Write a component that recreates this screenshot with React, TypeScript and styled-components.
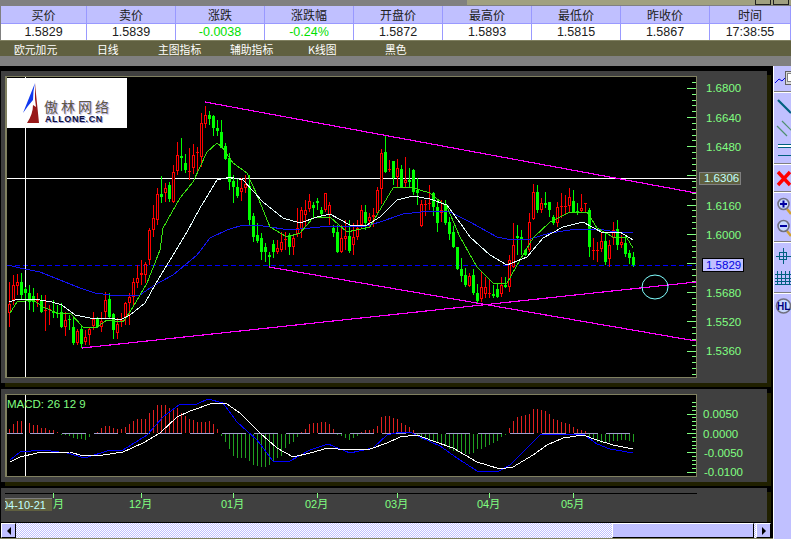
import styled, { createGlobalStyle } from "styled-components";

const GlobalStyle = createGlobalStyle`
  html, body {
    margin: 0;
    background: #000;
    overflow: hidden;
  }
`;

const Page = styled.div`
  width: 791px;
  height: 539px;
  background: #000;
  display: flex;
  flex-direction: column;
  overflow: hidden;
`;

const TitleStrip = styled.div`
  height: 5px;
  display: flex;
  justify-content: flex-end;
  background: linear-gradient(to right, #808080 0 467px, #a0a080 467px);
`;

const StripButton = styled.div`
  width: 14px;
  height: 4px;
  margin-right: 2px;
  border: 1px solid #202020;
  border-top: none;
`;

const QuoteTable = styled.div`
  display: grid;
  grid-template-columns: 86px repeat(7, 89px) 1fr;
  grid-template-rows: 18px 16px;
  padding-left: 1px;
  background: #808080;
  border-top: 1px solid #808080;
  border-bottom: 1px solid #808060;
  font-family: "Liberation Sans", "Noto Sans CJK SC", sans-serif;
`;

const HeadCell = styled.div`
  display: flex;
  align-items: center;
  justify-content: center;
  background: #c0c0ff;
  color: #202020;
  font-size: 12px;
  border-right: 1px solid #9999ff;
  border-bottom: 1px solid #9999ff;
`;

const ValueCell = styled.div<{ $down?: boolean }>`
  display: flex;
  align-items: center;
  justify-content: center;
  background: #fff;
  color: ${(p) => (p.$down ? "#00e000" : "#202020")};
  font-size: 12.5px;
  border-right: 1px solid #9999ff;
`;

const Toolbar = styled.div`
  height: 15px;
  display: grid;
  grid-template-columns: 83px 61px 72px 78px 77px auto;
  align-items: center;
  padding-left: 14px;
  background: #606040;
  color: #fff;
  font-family: "Noto Sans CJK SC", "Liberation Sans", sans-serif;
  font-size: 10.8px;
`;

const GreyBar = styled.div`
  height: 10px;
  background: #808080;
`;

const Main = styled.div`
  flex: 1;
  display: flex;
  min-height: 0;
`;

const ChartColumn = styled.div`
  width: 773px;
  padding-top: 5px;
  display: flex;
  flex-direction: column;
`;

const Panel = styled.div<{ $height: number; $gap: number }>`
  position: relative;
  width: 766px;
  height: ${(p) => p.$height}px;
  margin: 0 0 ${(p) => p.$gap}px 1px;
  background: #404040;
  box-shadow: 4px 4px 0 #202000;

  & > svg {
    display: block;
  }
`;

const Logo = styled.div`
  position: absolute;
  left: 6px;
  top: 7px;
  width: 120px;
  height: 50px;
  background: #fff;
`;

const LogoMark = styled.svg`
  position: absolute;
  left: 16px;
  top: 3px;
`;

const LogoName = styled.div`
  position: absolute;
  left: 37px;
  top: 21px;
  color: #605848;
  font-family: "Noto Sans CJK SC", sans-serif;
  font-size: 14px;
  letter-spacing: 3px;
  line-height: 15px;
  white-space: nowrap;
  text-shadow: 1px 1px 1px #b0a8e0;
`;

const LogoSite = styled.div`
  position: absolute;
  left: 38px;
  top: 36px;
  color: #101040;
  font-family: "Liberation Sans", sans-serif;
  font-size: 9px;
  font-weight: 700;
  letter-spacing: 0.6px;
  line-height: 11px;
  text-shadow: 1px 1px 0 #a0a0d0;
`;

const ScrollBar = styled.div`
  position: relative;
  height: 16px;
  display: flex;
  margin-left: 1px;
  border-top: 1px solid #000;
  box-sizing: border-box;
  background: repeating-conic-gradient(#c0c0ff 0 25%, #fff 0 50%) 0 0 / 2px 2px;
`;

const ScrollButton = styled.div`
  width: 15px;
  display: flex;
  align-items: center;
  justify-content: center;
  background: #c0c0ff;
  border: 1px solid;
  border-color: #fff #000 #000 #fff;
  box-sizing: border-box;
`;

const ScrollThumb = styled.div`
  width: 142px;
  margin: 0 2px 0 auto;
  background: #c0c0ff;
  border: 1px solid;
  border-color: #fff #000 #000 #fff;
  box-sizing: border-box;
`;

const ScrollSpacer = styled.div`
  width: 2px;
  background: #000;
`;

const BottomEdge = styled.div`
  height: 1px;
  background: #808060;
`;

const SideBar = styled.div`
  width: 18px;
  padding-top: 4px;
  box-sizing: border-box;
  background: #c0c0ff;
  border-left: 1px solid #fff;
  display: flex;
  flex-direction: column;
  overflow: hidden;
`;

const Tool = styled.svg<{ $height: number }>`
  display: block;
  flex: none;
  width: 22px;
  height: ${(p) => p.$height}px;
`;

const ToolRule = styled.div`
  flex: none;
  height: 2px;
  background: linear-gradient(#808080 50%, #fff 50%);
`;

const heads = ["买价", "卖价", "涨跌", "涨跌幅", "开盘价", "最高价", "最低价", "昨收价", "时间"];
const values = ["1.5829", "1.5839", "-0.0038", "-0.24%", "1.5872", "1.5893", "1.5815", "1.5867", "17:38:55"];
const menu = ["欧元加元", "日线", "主图指标", "辅助指标", "K线图", "黑色"];

// x = 9 + 4i; colour, body top, body bottom, wick top, wick bottom
const candleData = `
r304,313,282,327 r285,300,275,305 r282,286,274,295 g282,295,273,300 g289,293,287,300 g293,302,285,310
g296,302,288,312 r300,301,293,307 g301,312,295,313 r310,311,295,331 r309,310,305,325 g311,313,300,318
g313,314,305,318 g312,327,303,328 r320,327,312,336 g319,320,315,330 g327,343,318,345 r331,343,329,345
g329,344,325,348 r337,342,330,345 r329,335,327,345 r319,326,312,330 g318,327,317,328 r321,327,312,332
r300,312,292,318 g299,317,293,318 g314,330,313,339 r324,333,318,339 r320,321,313,327 r303,317,302,325
r297,303,293,325 r282,297,278,307 r278,283,265,288 r273,275,260,285 r264,275,262,283 r230,260,228,265
r218,230,205,237 r194,220,188,225 g194,197,176,203 r188,193,183,202 g185,199,182,202 r172,202,165,203
r155,171,142,175 g156,158,138,171 g163,170,154,173 r171,172,148,180 r155,168,144,174 r152,153,147,171
r123,157,113,167 r115,124,106,128 g115,119,111,125 g116,128,115,136 g128,131,120,136 g132,148,120,148
g146,159,143,160 g158,182,153,190 g181,187,175,203 g187,196,178,198 r188,192,178,201 r184,188,175,193
g186,220,175,225 g216,237,213,242 g235,241,223,243 g238,252,233,260 g247,252,243,262 g255,257,252,268
g244,252,240,258 r248,252,240,254 r242,250,232,252 r239,240,232,250 g235,247,233,255 r238,247,235,255
r228,234,208,237 r210,229,207,238 r210,215,200,227 r201,209,194,212 g205,208,202,217 g201,203,198,210
g210,214,207,217 r193,210,193,212 r205,215,202,225 g228,233,225,237 g232,252,225,253 r238,252,225,253
r236,239,220,250 g236,251,220,253 r237,245,223,255 r228,237,220,240 r210,225,205,228 g212,223,205,230
r217,221,213,228 r215,217,208,227 r190,213,187,213 r153,189,149,204 g152,172,135,173 r169,170,160,172
g161,178,161,185 r168,177,159,187 g169,187,165,187 r180,183,157,188 g180,182,168,187 g170,192,169,195
g190,193,178,205 r204,226,200,227 r204,205,200,216 r203,204,185,210 g193,207,192,216 g207,223,200,232
r210,213,200,222 g204,223,200,225 g222,234,217,240 g232,247,226,248 g247,269,247,270 g269,276,258,282
g275,285,268,287 r276,286,273,287 g275,293,269,295 g293,301,284,303 r287,299,272,302 r287,294,277,298
r293,294,279,298 g294,296,285,298 g289,297,283,298 r285,294,277,297 g285,287,277,288 r260,287,255,292
r245,267,223,268 g236,238,225,255 g237,239,230,255 g250,255,249,256 r222,250,213,252 r192,219,184,220
g192,210,185,213 r203,210,198,213 g203,205,192,208 g202,210,202,217 g217,223,215,225 r207,223,202,227
r206,207,193,218 r206,207,195,215 r197,206,188,212 g201,213,190,213 g211,213,203,215 r208,211,194,212
r203,204,203,213 g210,247,208,257 r250,251,238,260 r250,251,242,262 r241,249,232,252 g241,262,232,265
r245,259,240,267 r230,238,222,245 g229,245,220,250 r242,245,235,248 g243,254,235,257 g253,258,250,264
g257,265,252,267
`
  .trim()
  .split(/\s+/)
  .map((s, i) => {
    const [top, bot, hi, lo] = s.slice(1).split(",").map(Number);
    return { x: 9 + 4 * i, up: s[0] === "r", top, bot, hi, lo };
  });

const maBlue =
  "8,265 20,268 40,272 60,280 80,288 95,293 110,295 130,296 140,295 150,288 160,282 173,275 197,255 210,238 227,230 243,225 263,226 290,230 310,228 330,226 363,227 380,222 403,214 430,211 450,212 470,222 497,237 507,239 530,239 550,233 577,229 597,229 617,232 633,233";
const maWhite =
  "9,302 15,300 25,299 40,300 52,302 62,305 75,315 90,318 110,318 120,320 130,315 145,303 155,285 167,265 187,232 200,208 217,180 230,177 243,180 263,202 283,218 300,223 317,217 330,214 350,225 367,225 380,217 397,200 413,196 430,199 447,205 463,227 470,237 490,255 507,265 527,257 543,238 563,227 583,222 603,233 620,232 633,240";
const maGreen =
  "10,313 17,302 33,300 43,307 57,313 70,313 83,327 97,327 107,320 123,322 133,307 147,283 160,250 163,228 180,198 193,182 207,152 217,143 222,147 233,163 247,173 257,195 270,227 287,237 300,233 313,218 330,217 347,232 370,227 378,213 393,188 410,187 430,193 447,207 460,237 473,260 477,267 493,283 507,283 520,260 533,238 550,222 570,212 587,212 597,228 613,237 627,238 633,248";

const macdWhite =
  "10,462 20,457 37,453 70,452 83,456 103,455 123,452 143,443 160,433 177,417 190,411 213,403 227,404 240,413 260,433 277,448 293,457 310,453 328,448 347,450 370,449 387,443 400,437 417,435 433,441 453,448 477,462 500,469 513,467 533,455 547,445 563,438 583,435 597,440 613,445 633,449";
const macdBlue =
  "10,460 20,452 43,450 67,453 85,458 107,451 123,450 147,435 163,417 180,404 197,404 208,399 223,403 237,422 257,440 273,461 290,461 310,450 328,444 350,453 373,448 387,435 400,432 410,432 420,437 440,446 457,458 477,471 497,472 510,465 523,452 540,435 560,434 583,434 597,444 610,449 633,453";

const histogram = [
  4, 9, 12, 12, 0, 10, 8, 8, 5, 5, 3, 3, 1, -1, -1, -2, -4, -5, -5, -6, -3, 0, 1, 5, 7, 7, 5, 4, 4, 6, 9, 12, 14, 14, 14, 20,
  23, 28, 28, 28, 25, 25, 25, 20, 17, 14, 13, 11, 11, 11, 12, 9, 4, -2, -8, -15, -22, -24, -24, -24, -27, -31, -32, -33, -33,
  -31, -28, -24, -22, -14, -10, -8, -3, 1, 4, 9, 10, 10, 11, 11, 9, 4, -1, -2, -4, -6, -4, -2, 1, 3, 3, 4, 7, 16, 17, 17, 15, 14,
  10, 8, 6, 3, -1, -5, -6, -7, -8, -9, -10, -12, -15, -17, -18, -18, -20, -20, -19, -15, -15, -13, -11, -9, -7, -3, -1, 5, 12,
  16, 17, 18, 19, 24, 24, 23, 22, 19, 14, 13, 11, 10, 9, 6, 4, 3, 2, -3, -4, -8, -9, -9, -8, -7, -7, -6, -6, -7, -8,
];

const priceLabels = [
  ["1.6800", 88],
  ["1.6640", 118],
  ["1.6480", 147],
  ["1.6160", 206],
  ["1.6000", 235],
  ["1.5680", 293],
  ["1.5520", 322],
  ["1.5360", 351],
] as const;

const macdLabels = [
  ["0.0050", 414],
  ["0.0000", 434],
  ["-0.0050", 453],
  ["-0.0100", 472],
] as const;

const months = [
  ["12月", 141],
  ["01月", 233],
  ["02月", 317],
  ["03月", 397],
  ["04月", 489],
  ["05月", 573],
] as const;

const axisFont = { fontFamily: '"Liberation Sans", "Noto Sans CJK SC", sans-serif', fill: "#80ff80" };

function Frame({ top, bottom }: { top: number; bottom: number }) {
  return (
    <>
      <rect x={5} y={top} width={692} height={bottom - top} fill="#808060" />
      <rect x={7} y={top + 1} width={689} height={bottom - top - 2} fill="#000" />
    </>
  );
}

function Ticks({ from, to, step, every, first }: { from: number; to: number; step: number; every: number; first: number }) {
  const out = [];
  for (let i = 0; from + i * step <= to; i++) {
    const y = Math.round(from + i * step);
    const long = (i - first) % every === 0;
    out.push(<rect key={i} x={long ? 687 : 692} y={y} width={long ? 9 : 4} height={1} fill="#80ff80" />);
  }
  return <>{out}</>;
}

function Candles() {
  return (
    <g>
      {candleData.map((c) => {
        const color = c.up ? "#ff0000" : "#00ff00";
        const h = c.bot - c.top;
        return (
          <g key={c.x}>
            <rect x={c.x} y={c.hi} width={1} height={c.lo - c.hi} fill={color} />
            <rect x={c.x - 1} y={c.top} width={3} height={Math.max(h, 1)} fill={color} />
            {c.up && h > 2 && <rect x={c.x} y={c.top + 1} width={1} height={h - 2} fill="#000" />}
          </g>
        );
      })}
    </g>
  );
}

function PriceChart() {
  return (
    <svg width={766} height={312} viewBox="1 71 766 312" shapeRendering="crispEdges">
      <Frame top={76} bottom={378} />
      <Ticks from={82} to={377} step={5.84} every={5} first={1} />
      <line x1={7} y1={265.5} x2={696} y2={265.5} stroke="#0000ff" strokeDasharray="5 3" />
      <rect x={25} y={77} width={1} height={300} fill="#fff" />
      <rect x={7} y={178} width={689} height={1} fill="#fff" />
      <Candles />
      <polyline points={maBlue} fill="none" stroke="#1414f0" />
      <polyline points={maGreen} fill="none" stroke="#38e010" />
      <polyline points={maWhite} fill="none" stroke="#eaffff" />
      <line x1={205} y1={102} x2={696} y2={193} stroke="#ff00ff" strokeWidth={1.15} />
      <line x1={269} y1={267} x2={696} y2={341} stroke="#ff00ff" strokeWidth={1.15} />
      <line x1={82} y1={348} x2={696} y2={282} stroke="#ff00ff" strokeWidth={1.15} />
      <ellipse cx={655} cy={287} rx={13} ry={12} fill="none" stroke="#80ffff" shapeRendering="auto" />
      <g shapeRendering="auto">
        {priceLabels.map(([t, y]) => (
          <text key={t} x={706} y={y + 4} fontSize={11.5} {...axisFont}>
            {t}
          </text>
        ))}
        <rect x={699.5} y={172.5} width={41} height={12} fill="#606040" stroke="#808080" />
        <text x={704} y={182} fontSize={11.5} fontFamily={axisFont.fontFamily} fill="#c0ffff">
          1.6306
        </text>
        <rect x={702.5} y={258.5} width={41} height={13} fill="#c0c0ff" stroke="#000" />
        <text x={706} y={269} fontSize={11.5} fontFamily={axisFont.fontFamily} fill="#0000e0">
          1.5829
        </text>
      </g>
    </svg>
  );
}

function MacdChart() {
  return (
    <svg width={766} height={93} viewBox="1 389 766 93" shapeRendering="crispEdges">
      <Frame top={394} bottom={477} />
      <Ticks from={402} to={472} step={3.87} every={5} first={3} />
      <rect x={7} y={433} width={16} height={1} fill="#a0a0d0" />
      <line x1={30} y1={433.5} x2={632} y2={433.5} stroke="#a0a0d0" strokeDasharray="24 8" />
      {histogram.map((v, i) => {
        const x = i < 98 ? 9 + 4 * i : 401 + 4 * (i - 98);
        return v >= 0 ? (
          <rect key={i} x={x} y={433 - v} width={1} height={v} fill="#e02020" />
        ) : (
          <rect key={i} x={x} y={434} width={1} height={-v} fill="#20a020" />
        );
      })}
      <rect x={25} y={395} width={1} height={81} fill="#fff" />
      <polyline points={macdBlue} fill="none" stroke="#0000ff" />
      <polyline points={macdWhite} fill="none" stroke="#fff" />
      <g shapeRendering="auto">
        <text x={7} y={408} fontSize={11.5} {...axisFont}>
          MACD: 26 12 9
        </text>
        {macdLabels.map(([t, y]) => (
          <text key={t} x={t.startsWith("-") ? 704 : 703} y={y + 4} fontSize={11.5} {...axisFont}>
            {t}
          </text>
        ))}
      </g>
      <rect x={697} y={476} width={60} height={6} fill="#404040" />
    </svg>
  );
}

function TimeAxis() {
  return (
    <svg width={766} height={34} viewBox="1 488 766 34" shapeRendering="crispEdges">
      <rect x={5} y={493} width={692} height={1} fill="#000" />
      <rect x={53} y={493} width={1} height={5} fill="#80ff80" />
      {months.map(([t, x]) => (
        <g key={t}>
          <rect x={x} y={493} width={1} height={5} fill="#80ff80" />
          <text x={x - 12} y={508} fontSize={11} {...axisFont} shapeRendering="auto">
            {t}
          </text>
        </g>
      ))}
      <text x={53} y={508} fontSize={11} {...axisFont} shapeRendering="auto">
        月
      </text>
      <rect x={5} y={498} width={47} height={13} fill="#606040" />
      <rect x={5} y={498} width={47} height={1} fill="#808080" />
      <svg x={5} y={498} width={47} height={13}>
        <text x={41} y={11} textAnchor="end" fontSize={11} fontFamily={axisFont.fontFamily} fill="#c0ffff">
          04-10-21
        </text>
      </svg>
    </svg>
  );
}

function LineChartTool() {
  return (
    <Tool $height={21} viewBox="0 0 22 21">
      <polyline points="1,13 5,9 8,11 12,7 15,10 17,7" fill="none" stroke="#0000e0" />
      <rect x={11.5} y={1.5} width={8} height={13} fill="#d8d8d8" stroke="#606060" />
      <rect x={13.5} y={3.5} width={5} height={8} fill="#fff" stroke="#808080" />
    </Tool>
  );
}

function TrendTool() {
  return (
    <Tool $height={26} viewBox="0 0 22 26">
      <line x1={4} y1={7} x2={17} y2={20} stroke="#006080" strokeWidth={2.2} />
    </Tool>
  );
}

function ChannelTool() {
  return (
    <Tool $height={22} viewBox="0 0 22 22">
      <line x1={3} y1={7} x2={13} y2={17} stroke="#509070" strokeWidth={1.2} />
      <line x1={8} y1={2} x2={18} y2={12} stroke="#509070" strokeWidth={1.2} />
    </Tool>
  );
}

function LevelsTool() {
  return (
    <Tool $height={22} viewBox="0 0 22 22">
      <rect x={4} y={3} width={16} height={1} fill="#006080" />
      <rect x={4} y={6} width={16} height={1} fill="#006080" />
      <rect x={4} y={4} width={16} height={2} fill="#fff" />
      <rect x={4} y={14} width={16} height={1} fill="#006080" />
    </Tool>
  );
}

function DeleteTool() {
  return (
    <Tool $height={26} viewBox="0 0 22 26">
      <path d="M4 7 L16 20 M16 7 L4 20" stroke="#ff0000" strokeWidth={3.4} />
    </Tool>
  );
}

function ZoomTool({ plus, cy }: { plus?: boolean; cy: number }) {
  return (
    <Tool $height={24} viewBox="0 0 22 24">
      <line x1={13} y1={cy + 5} x2={17} y2={cy + 10} stroke="#d0a030" strokeWidth={2.4} />
      <circle cx={9.5} cy={cy} r={5.5} fill="#c8d8ff" stroke="#707080" strokeWidth={1.6} />
      <rect x={6} y={cy - 1} width={7} height={2} fill="#0000a0" />
      {plus && <rect x={8.5} y={cy - 3.5} width={2} height={7} fill="#0000a0" />}
    </Tool>
  );
}

function CrossTool() {
  return (
    <Tool $height={25} viewBox="0 0 22 25">
      <rect x={5.5} y={9.5} width={7} height={7} fill="none" stroke="#006080" />
      <rect x={9} y={5} width={1} height={16} fill="#006080" />
      <rect x={2} y={13} width={15} height={1} fill="#006080" />
    </Tool>
  );
}

function GridTool() {
  return (
    <Tool $height={24} viewBox="0 0 22 24">
      {[3, 7, 11, 15].map((x) => (
        <rect key={x} x={x} y={3} width={1} height={14} fill="#006080" />
      ))}
      {[6, 10, 13, 16].map((y) => (
        <rect key={y} x={1} y={y} width={17} height={1} fill="#006080" />
      ))}
    </Tool>
  );
}

function HighLowTool() {
  return (
    <Tool $height={24} viewBox="0 0 22 24">
      <circle cx={9.5} cy={12} r={7} fill="#c8d8ff" stroke="#707080" strokeWidth={1.6} />
      <text x={3} y={16} fontSize={10} fontWeight={700} fontFamily="Liberation Sans, sans-serif" fill="#000080">
        HL
      </text>
    </Tool>
  );
}

export default function App() {
  return (
    <Page>
      <GlobalStyle />
      <TitleStrip>
        <StripButton />
        <StripButton />
      </TitleStrip>
      <QuoteTable>
        {heads.map((h) => (
          <HeadCell key={h}>{h}</HeadCell>
        ))}
        {values.map((v, i) => (
          <ValueCell key={v} $down={i === 2 || i === 3}>
            {v}
          </ValueCell>
        ))}
      </QuoteTable>
      <Toolbar>
        {menu.map((m) => (
          <span key={m}>{m}</span>
        ))}
      </Toolbar>
      <GreyBar />
      <Main>
        <ChartColumn>
          <Panel $height={312} $gap={6}>
            <PriceChart />
            <Logo>
              <LogoMark width={20} height={44} viewBox="0 0 20 44">
                <path d="M12 2 L0 32 L5 25 L10 19 L10.5 10 Z" fill="#1038f0" />
                <path d="M12 2 C13 14 15 30 16 42 L4 42 C8 36 10 30 10 24 L13 26 L12 18 Z" fill="#981818" />
              </LogoMark>
              <LogoName>傲林网络</LogoName>
              <LogoSite>ALLONE.CN</LogoSite>
            </Logo>
          </Panel>
          <Panel $height={93} $gap={6}>
            <MacdChart />
          </Panel>
          <Panel $height={34} $gap={0}>
            <TimeAxis />
          </Panel>
          <ScrollBar>
            <ScrollButton>
              <svg width={6} height={8} viewBox="0 0 6 8">
                <path d="M5 0 L1 4 L5 8 Z" fill="#000" />
              </svg>
            </ScrollButton>
            <ScrollThumb />
            <ScrollButton>
              <svg width={6} height={8} viewBox="0 0 6 8">
                <path d="M1 0 L5 4 L1 8 Z" fill="#000" />
              </svg>
            </ScrollButton>
            <ScrollSpacer />
          </ScrollBar>
          <BottomEdge />
        </ChartColumn>
        <SideBar>
          <LineChartTool />
          <ToolRule />
          <TrendTool />
          <ChannelTool />
          <LevelsTool />
          <ToolRule />
          <DeleteTool />
          <ToolRule />
          <ZoomTool plus cy={11} />
          <ZoomTool cy={9} />
          <ToolRule />
          <CrossTool />
          <GridTool />
          <ToolRule />
          <HighLowTool />
        </SideBar>
      </Main>
    </Page>
  );
}
